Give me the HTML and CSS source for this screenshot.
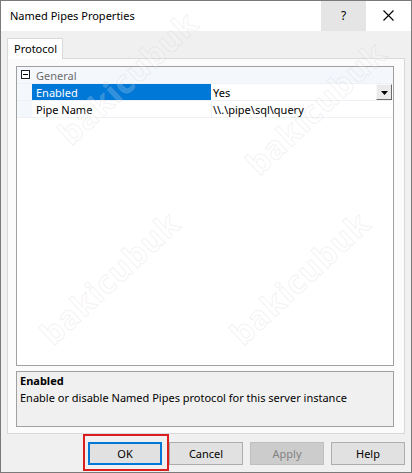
FILE: index.html
```html
<!DOCTYPE html>
<html>
<head>
<meta charset="utf-8">
<link rel="stylesheet" href="styles.css">
</head>
<body>
<div class="window">
  <div class="titlebar">
    <div class="title">Named Pipes Properties</div>
    <div class="tb-btn help">?</div>
    <div class="tb-btn close">
      <svg width="11" height="11" viewBox="0 0 11 11"><path d="M0.5 0.5 L10.5 10.5 M10.5 0.5 L0.5 10.5" stroke="#000" stroke-width="1.1" fill="none"/></svg>
    </div>
  </div>
  <div class="body">
    <div class="tabs"><div class="tab">Protocol</div></div>
    <div class="panel">
      <div class="grid">
        <div class="row cat">
          <span class="margin"><span class="minus"></span></span>
          <span class="cat-label">General</span>
        </div>
        <div class="row sel">
          <span class="margin"></span>
          <span class="name">Enabled</span>
          <span class="value">Yes<span class="dd"><svg width="7" height="4" viewBox="0 0 7 4"><path d="M0 0 H7 L3.5 4 Z" fill="#000"/></svg></span></span>
        </div>
        <div class="row">
          <span class="margin"></span>
          <span class="name">Pipe Name</span>
          <span class="value">\\.\pipe\sql\query</span>
        </div>
      </div>
      <div class="desc">
        <div class="desc-title">Enabled</div>
        <div class="desc-text">Enable or disable Named Pipes protocol for this server instance</div>
      </div>
    </div>
    <div class="buttons">
      <div class="btn-wrap">
        <button class="btn default">OK</button>
        <span class="annot"></span>
      </div>
      <button class="btn">Cancel</button>
      <button class="btn disabled">Apply</button>
      <button class="btn">Help</button>
    </div>
  </div>
  <span class="wm wm1">bakicubuk</span>
  <span class="wm wm2">bakicubuk</span>
  <span class="wm wm3">bakicubuk</span>
  <span class="wm wm4">bakicubuk</span>
</div>
</body>
</html>
```
FILE: styles.css
```css
* { box-sizing: border-box; }
html, body { margin: 0; padding: 0; }
body {
  width: 412px;
  height: 473px;
  overflow: hidden;
  font-family: "Noto Sans", "Open Sans", "DejaVu Sans", sans-serif;
  font-size: 11px;
  color: #000;
}
.window {
  position: relative;
  width: 412px;
  height: 473px;
  border: 1px solid #7a7a7a;
  background: #f0f0f0;
  display: flex;
  flex-direction: column;
  overflow: hidden;
}
.titlebar {
  height: 30px;
  background: #fff;
  display: flex;
  align-items: stretch;
  flex: none;
}
.title {
  flex: 1;
  padding-left: 9px;
  line-height: 29px;
  font-size: 11px;
}
.tb-btn {
  width: 45px;
  display: flex;
  align-items: center;
  justify-content: center;
}
.help {
  background: #e5e5e5;
  font-size: 12px;
  padding-bottom: 1px;
}
.close svg { display: block; margin-top: -1px; }
.body {
  flex: 1;
  padding: 7px 6px 7px 6px;
  display: flex;
  flex-direction: column;
}
.tabs {
  display: flex;
  height: 20px;
  flex: none;
}
.tab {
  width: 56px;
  height: 21px;
  background: #fff;
  border: 1px solid #d9d9d9;
  border-bottom: none;
  padding-left: 6px;
  line-height: 19px;
  position: relative;
  z-index: 1;
}
.panel {
  width: 398px;
  height: 376px;
  flex: none;
  border: 1px solid #d9d9d9;
  background: #fbfbfb;
  padding: 7px 10px 6px 8px;
  display: flex;
  flex-direction: column;
}
.grid {
  height: 300px;
  border: 1px solid #a0a0a0;
  background: #fff;
  flex: none;
}
.row {
  display: flex;
  height: 17px;
  line-height: 17px;
  border-bottom: 1px solid #eef1f6;
}
.margin {
  width: 15px;
  flex: none;
  background: #f4f7fc;
  position: relative;
}
.cat {
  background: #f4f7fc;
}
.minus {
  position: absolute;
  left: 4px;
  top: 3px;
  width: 9px;
  height: 9px;
  border: 1px solid #1e1e1e;
  background: #fff;
}
.minus::after {
  content: "";
  position: absolute;
  left: 1px;
  top: 3px;
  width: 5px;
  height: 1px;
  background: #000;
}
.cat-label {
  padding-left: 4px;
  color: #6d6d6d;
}
.name {
  width: 180px;
  flex: none;
  padding-left: 4px;
  border-right: 1px solid #eef1f6;
}
.sel .name {
  background: #0078d7;
  color: #fff;
  border-right-color: #fff;
}
.value {
  flex: 1;
  padding-left: 1px;
  position: relative;
}
.dd {
  position: absolute;
  right: 1px;
  top: 0;
  width: 16px;
  height: 16px;
  background: #eaeaea;
  border: 1px solid;
  border-color: #f8f8f8 #6a6a6a #6a6a6a #f8f8f8;
  display: flex;
  align-items: center;
  justify-content: center;
}
.dd svg { display: block; margin-top: 1px; }
.desc {
  margin-top: 5px;
  height: 56px;
  border: 1px solid #a0a0a0;
  background: #f0f0f0;
  padding: 1px 3px;
  flex: none;
}
.desc-title {
  font-weight: bold;
  line-height: 16px;
}
.desc-text {
  line-height: 18px;
}
.buttons {
  margin-top: 8px;
  display: flex;
  justify-content: flex-end;
  gap: 7px;
}
.btn-wrap {
  position: relative;
  display: flex;
}
.btn {
  width: 74px;
  height: 23px;
  margin: 0;
  padding: 0;
  font-family: inherit;
  font-size: 11px;
  color: #000;
  background: #e1e1e1;
  border: 1px solid #adadad;
  border-radius: 0;
}
.btn.default {
  border: 2px solid #0078d7;
}
.btn.disabled {
  background: #cccccc;
  border-color: #bfbfbf;
  color: #838383;
}
.annot {
  position: absolute;
  left: -5px;
  top: -8px;
  width: 86px;
  height: 37px;
  border: 2px solid #d9201f;
}
.wm {
  position: absolute;
  font-family: "Open Sans", "Noto Sans", sans-serif;
  font-weight: bold;
  font-size: 32px;
  color: rgba(255, 255, 255, 0.2);
  -webkit-text-stroke: 1px rgba(180, 180, 180, 0.18);
  transform: rotate(-43deg);
  transform-origin: center;
  pointer-events: none;
  white-space: nowrap;
  letter-spacing: 1px;
}
.wm1 { left: 38px; top: 55px; }
.wm2 { left: 20px; top: 255px; }
.wm3 { left: 210px; top: 255px; }
.wm4 { left: 226px; top: 85px; }
```
